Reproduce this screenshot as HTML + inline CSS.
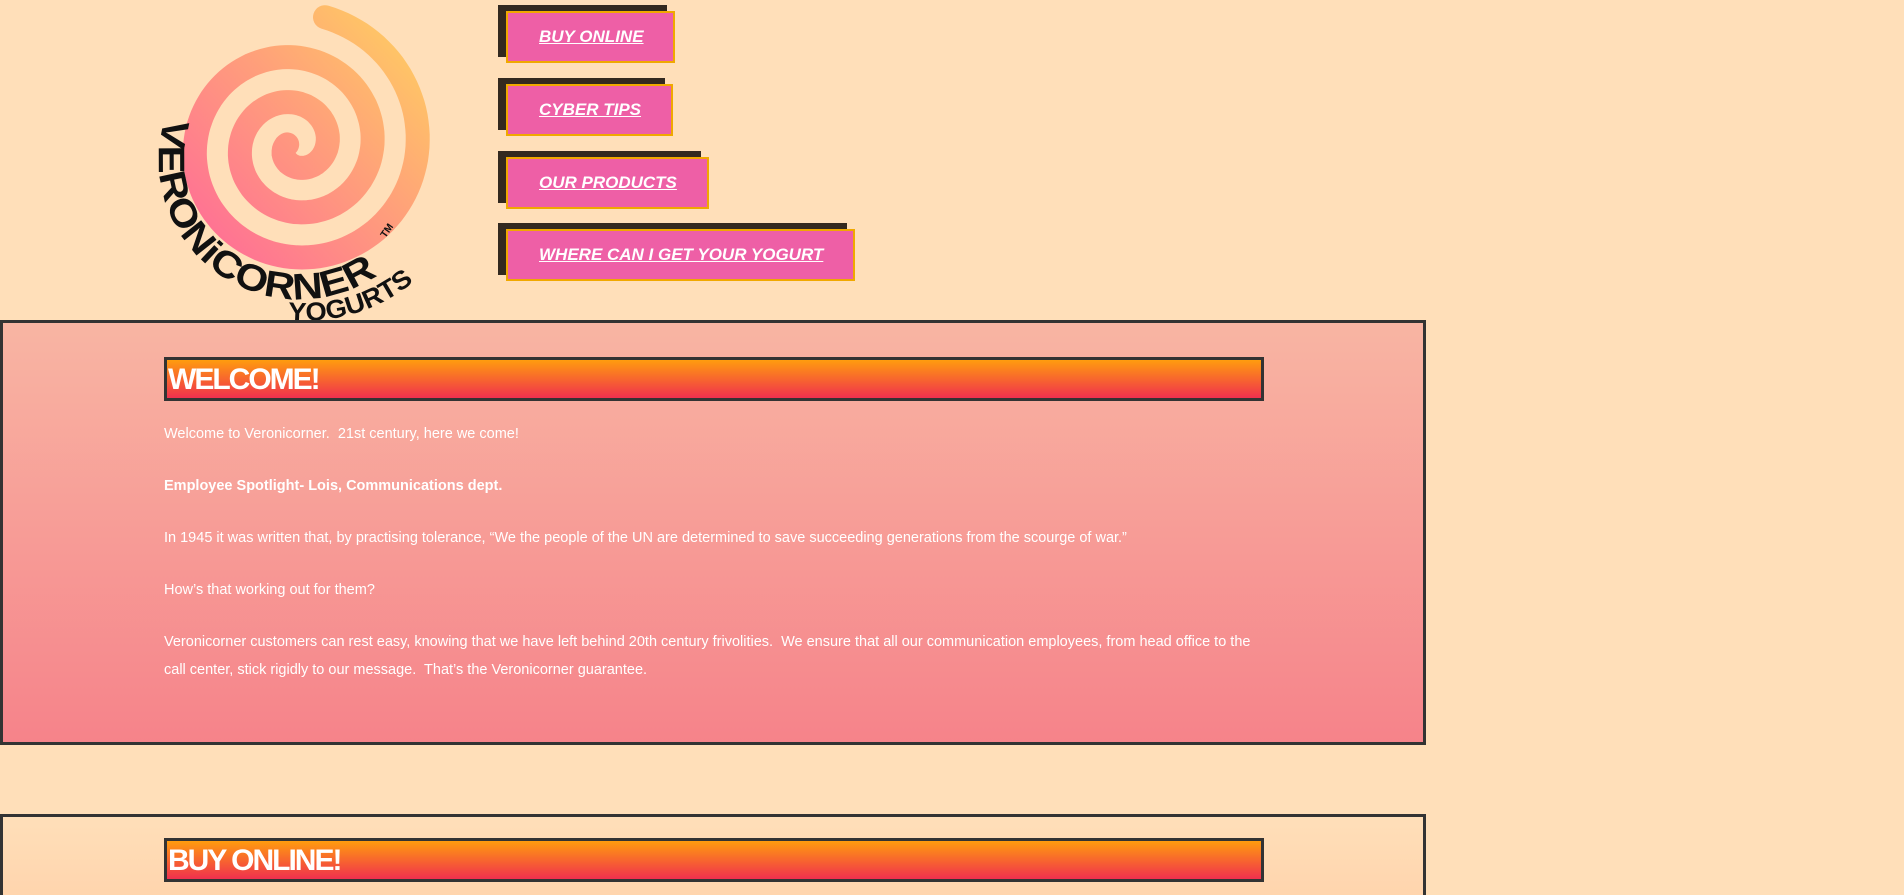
<!DOCTYPE html>
<html><head><meta charset="utf-8"><style>
html,body{margin:0;padding:0;background:#ffdfb9;width:1904px;height:895px;overflow:hidden;font-family:"Liberation Sans",Arial,sans-serif;}
#wrap{position:relative;width:1904px;height:895px;overflow:hidden;}
.btn{position:absolute;left:506px;height:52px;background:#ee5fa6;border:2px solid #f0a800;box-shadow:-8px -6px 0 #33291f;box-sizing:border-box;}
.btn a{position:absolute;left:31px;top:14px;color:#fff;font-style:italic;font-weight:bold;font-size:17px;text-decoration:underline;white-space:nowrap;}
.sec{position:absolute;left:0;width:1426px;border:3px solid #333;box-sizing:border-box;}
.hdr{position:absolute;left:164px;width:1100px;height:44px;border:3px solid #333;box-sizing:border-box;background:linear-gradient(#ff9c0e,#f0304e);color:#fff;font-weight:bold;font-size:30px;letter-spacing:-2px;line-height:40px;padding-left:1px;}
.p{position:absolute;left:164px;color:#fff;font-size:14.5px;}
</style></head><body><div id="wrap">
<svg width="470" height="320" style="position:absolute;left:0;top:0">
<defs>
<linearGradient id="sg" x1="0" y1="1" x2="1" y2="0"><stop offset="0" stop-color="#ff6a98"/><stop offset="0.55" stop-color="#ffa07a"/><stop offset="1" stop-color="#ffd060"/></linearGradient>
<path id="arc1" d="M 165 118 A 140 140 0 0 0 398 258"/>
<path id="arc2" d="M 288 320 A 172 172 0 0 0 440 255"/>
</defs>
<path id="spiral" fill="none" stroke="url(#sg)" stroke-width="24" stroke-linecap="round"/>
<text font-family="Liberation Sans" font-weight="bold" font-size="37" fill="#111"><textPath href="#arc1" textLength="345" lengthAdjust="spacingAndGlyphs">VERONiCORNER</textPath></text>
<text font-family="Liberation Sans" font-weight="bold" font-size="26" fill="#111"><textPath href="#arc2" textLength="135" lengthAdjust="spacingAndGlyphs">YOGURTS</textPath></text>
<text x="382" y="236" font-family="Liberation Sans" font-weight="bold" font-size="10" fill="#111" transform="rotate(-55 386 234)">TM</text>
</svg>
<script>
(function(){var cx=295,cy=146,d="",b=7.2,end=-Math.PI/2+0.2,start=end+2*Math.PI*2.75;
for(var p=start;p>=end;p-=0.05){var r=8+b*(start-p);var x=cx+r*Math.cos(p),y=cy+r*Math.sin(p);d+=(d?" L ":"M ")+x.toFixed(1)+" "+y.toFixed(1);}
document.getElementById("spiral").setAttribute("d",d);})();
</script>
<div class="btn" style="top:11px;width:169px"><a>BUY ONLINE</a></div>
<div class="btn" style="top:84px;width:167px"><a>CYBER TIPS</a></div>
<div class="btn" style="top:157px;width:203px"><a>OUR PRODUCTS</a></div>
<div class="btn" style="top:229px;width:349px"><a>WHERE CAN I GET YOUR YOGURT</a></div>

<div class="sec" style="top:320px;height:425px;background:linear-gradient(#f8b5a3,#f6838a)"></div>
<div class="hdr" style="top:357px">WELCOME!</div>
<div class="p" style="top:426px">Welcome to Veronicorner.&nbsp; 21st century, here we come!</div>
<div class="p" style="top:478px;font-weight:bold">Employee Spotlight- Lois, Communications dept.</div>
<div class="p" style="top:530px">In 1945 it was written that, by practising tolerance, “We the people of the UN are determined to save succeeding generations from the scourge of war.”</div>
<div class="p" style="top:582px">How’s that working out for them?</div>
<div class="p" style="top:628px;width:1110px;line-height:28px">Veronicorner customers can rest easy, knowing that we have left behind 20th century frivolities.&nbsp; We ensure that all our communication employees, from head office to the call center, stick rigidly to our message.&nbsp; That’s the Veronicorner guarantee.</div>

<div class="sec" style="top:814px;height:120px;background:linear-gradient(#ffdfb9,#ffd0a8)"></div>
<div class="hdr" style="top:838px">BUY ONLINE!</div>
</div></body></html>
